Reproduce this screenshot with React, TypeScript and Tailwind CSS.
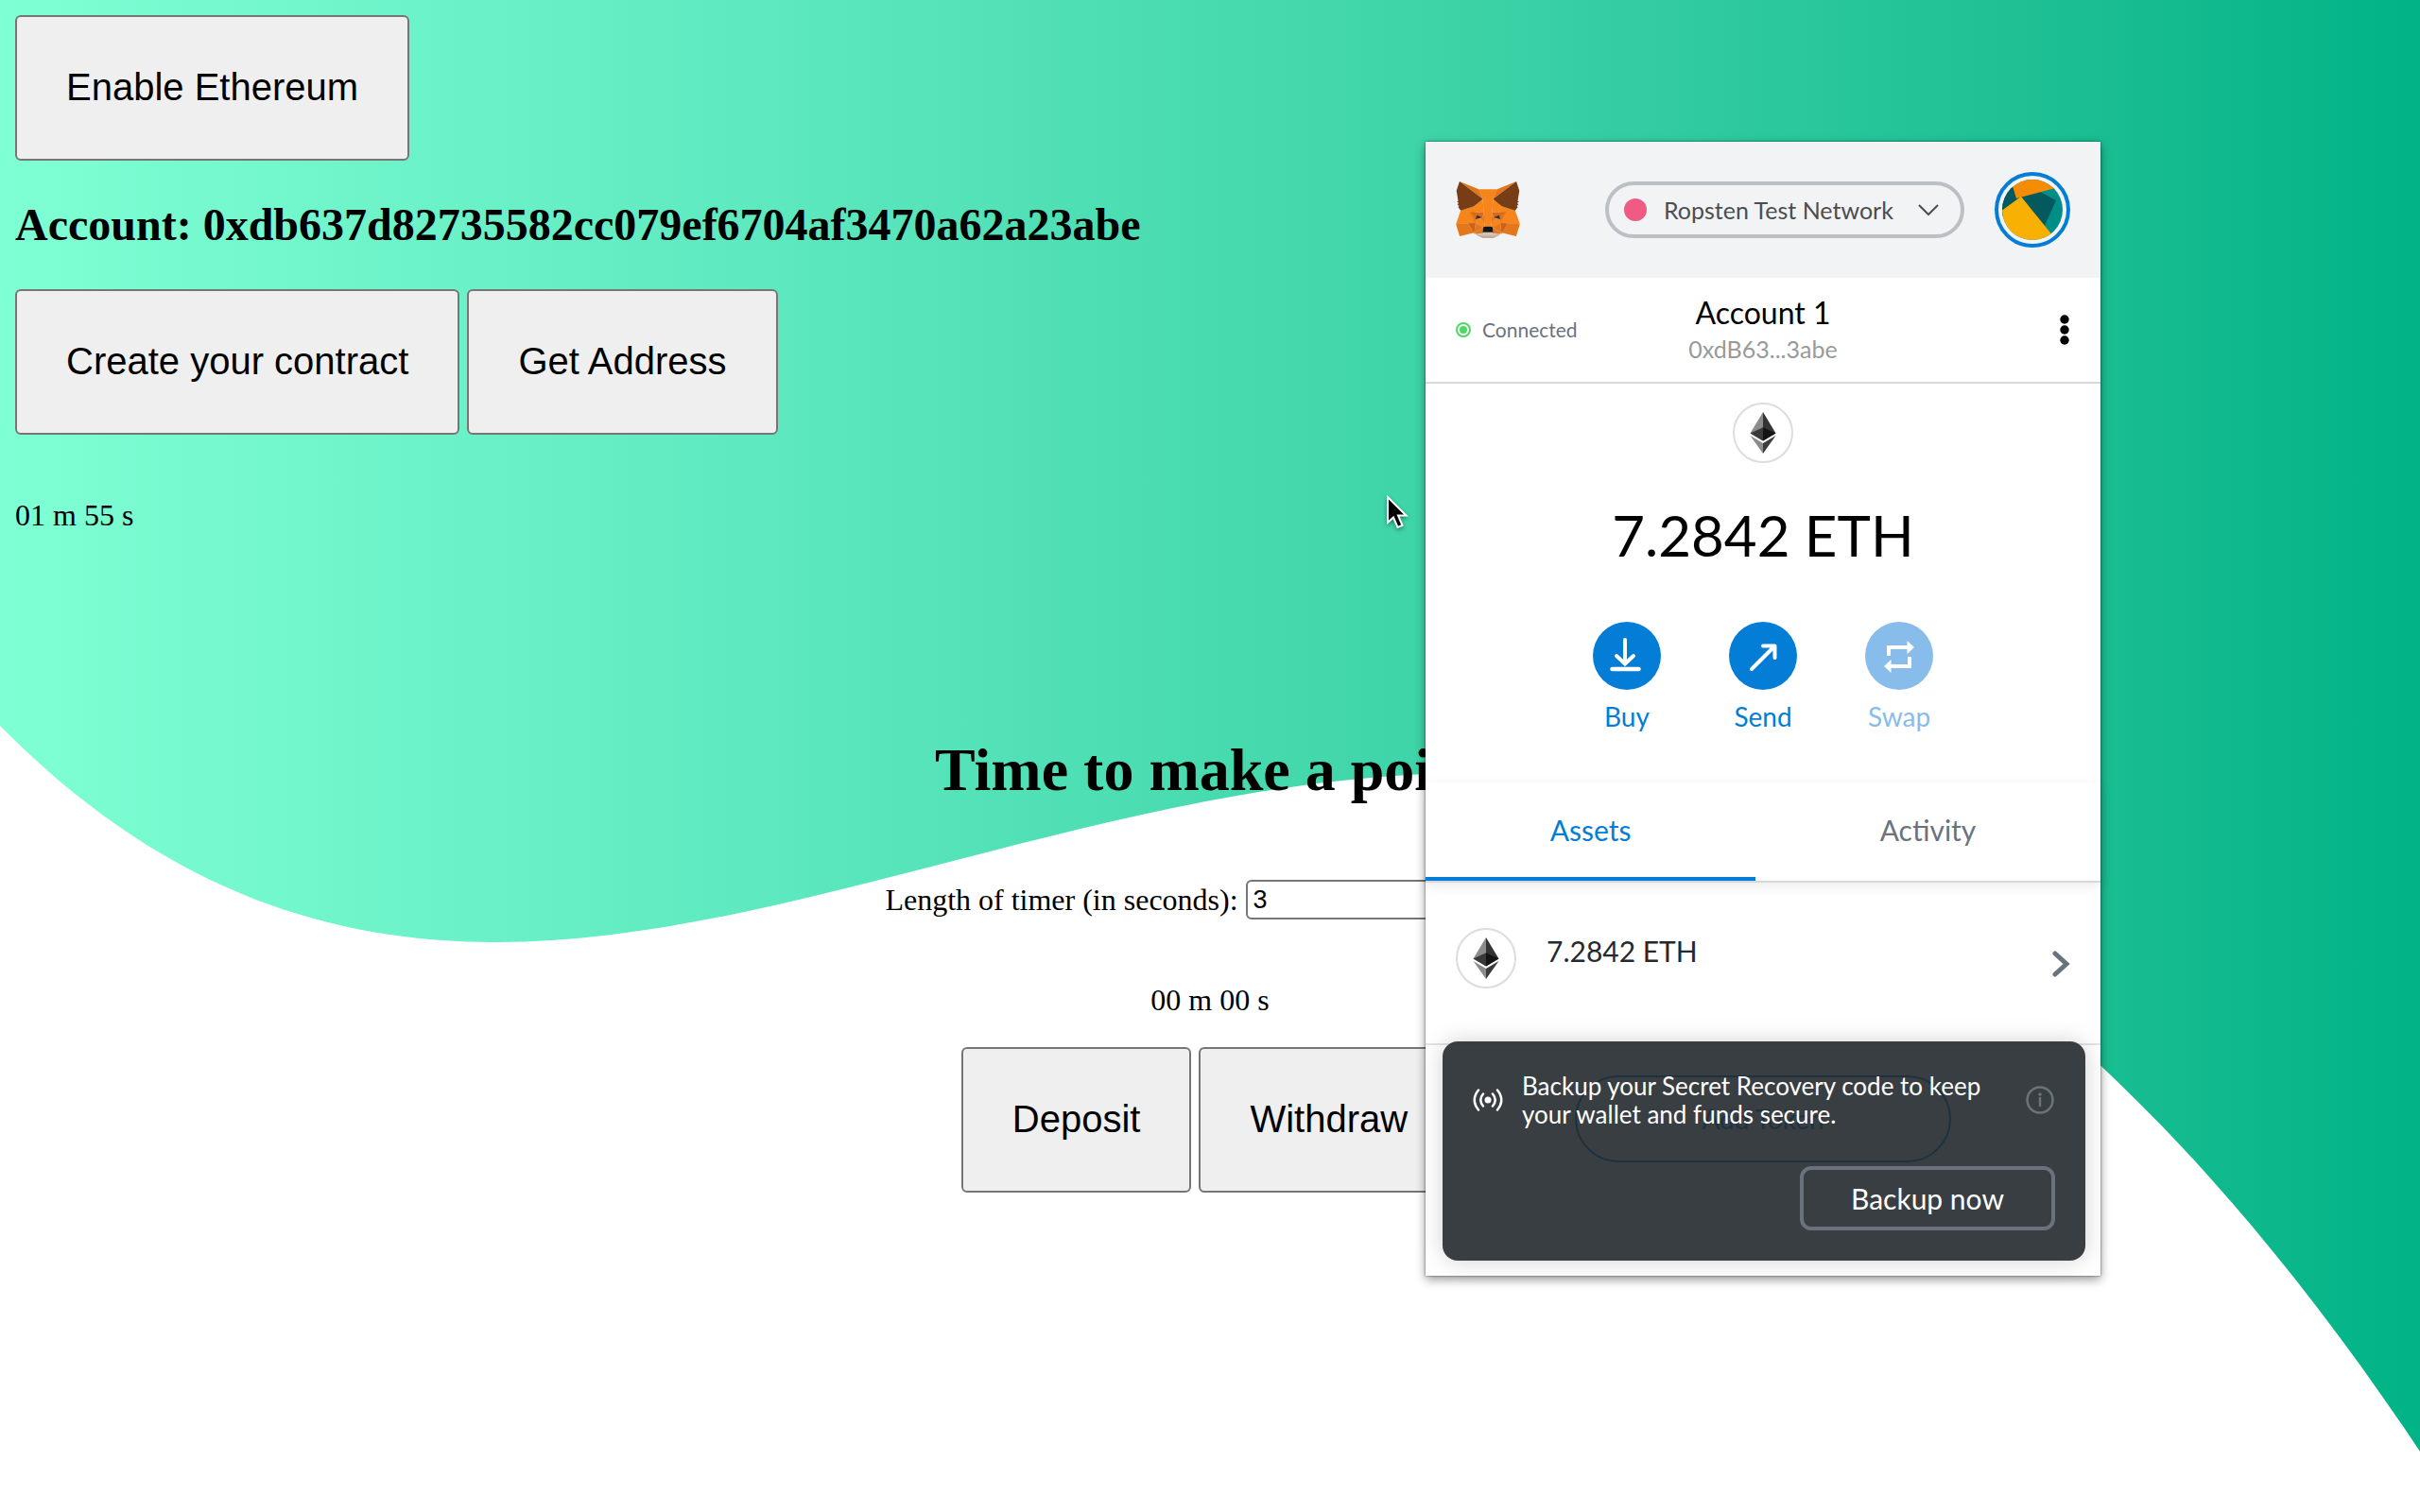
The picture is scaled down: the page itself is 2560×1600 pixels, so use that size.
import type { ReactNode } from "react";

function Wave() {
  return (
    <svg
      className="absolute inset-0 h-full w-full"
      viewBox="0 0 2560 1600"
      preserveAspectRatio="none"
      aria-hidden="true"
    >
      <defs>
        <linearGradient id="sea" x1="0" y1="0" x2="1" y2="0">
          <stop offset="0" stopColor="#7fffd4" />
          <stop offset="0.35" stopColor="#5ae6bd" />
          <stop offset="0.6" stopColor="#3dd3a7" />
          <stop offset="0.87" stopColor="#19bd91" />
          <stop offset="1" stopColor="#00b386" />
        </linearGradient>
      </defs>
      <path
        fill="url(#sea)"
        d="M0 0H2560V1536C2270 1100 1920 818 1560 818C1190 818 840 997 525 997C330 997 160 930 0 768Z"
      />
    </svg>
  );
}

function BigButton({ children }: { children: ReactNode }) {
  return (
    <button
      type="button"
      className="rounded-md border-2 border-[#767676] bg-[#efefef] px-[52px] pt-[51px] pb-[53px] font-['Liberation_Sans',Arial,sans-serif] text-[40px] leading-[46px] text-black"
    >
      {children}
    </button>
  );
}

function FoxHalf() {
  return (
    <>
      <polygon fill="#d7c1b3" points="66,173 88.3,168.75 106.5,168.75 106.5,187.9 89.4,187.9 68.6,178.9" />
      <polygon fill="#c0ad9e" points="67,176 88.3,180 106.5,180 106.5,187.9 89.4,187.9" />
      <polygon fill="#f6851b" points="75.4,27 88.9,58.5 95,150.2 106.5,150.2 106.5,27" />
      <polygon fill="#f6851b" points="16.3,96.2 .6,141.75 40,139.5 65.25,139.5 65.25,119.8 64.1,79.3 58.5,83.8" />
      <polygon fill="#d96a18" points="46.1,101.25 92.25,102.4 87.2,126 65.25,120.4" />
      <polygon fill="#e4751f" points="46.1,101.8 65.25,119.8 65.25,137.8" />
      <polygon fill="#f6851b" points="65.25,120.4 87.75,126 95,150.2 90,153 65.25,138.4" />
      <polygon fill="#e4761b" points="65.25,138.4 60.75,173.25 90.6,152.4" />
      <polygon fill="#e4751f" points="92.25,102.4 95,150.2 86.6,125.7" />
      <polygon fill="#cd6116" points="39.4,139 65.25,138.4 60.75,173.25" />
      <polygon fill="#e4761b" points="12.9,182 60.75,170 39.4,139 .6,141.75" />
      <polygon fill="#f6851b" points="88.9,58.5 64.7,78.75 46.1,101.25 92.25,103" />
      <polygon fill="#e4761b" points="60.75,173.25 90.6,152.4 88.3,171 68,174" />
      <polygon fill="#233447" points="70.3,112.5 64.1,125.4 86,119.8" />
      <polygon fill="#e2761b" points="12.4,.6 88.9,58.5 75.9,27" />
      <path fill="#763d16" d="M12.4.6 2.3 31.5 7.9 65.3 3.9 67.5 9.6 72.6 5 76.5 11.3 82 7.3 85.5 16.3 96.8 58.5 83.8C79 67.3 89 59 88.9 58.5Z" />
      <path fill="#161616" d="M90.6 152.4 88.3 171 91 168.75H106.5V150H94.5Z" />
    </>
  );
}

function Fox() {
  return (
    <svg className="h-[62px] w-[68px]" viewBox="0 0 212 189" role="img" aria-label="MetaMask">
      <FoxHalf />
      <g transform="matrix(-1 0 0 1 212 0)">
        <FoxHalf />
      </g>
    </svg>
  );
}

function EtherIcon() {
  return (
    <span className="flex size-16 shrink-0 items-center justify-center rounded-full border-2 border-[#dddddd] bg-white">
      <svg className="h-11 w-7" viewBox="0 0 256 417" aria-hidden="true">
        <polygon fill="#343434" points="128,0 128,288 256,212.3" />
        <polygon fill="#8c8c8c" points="128,0 0,212.3 128,288" />
        <polygon fill="#3c3c3b" points="128,312.2 128,417 256,236.6" />
        <polygon fill="#8c8c8c" points="128,417 128,312.2 0,236.6" />
        <polygon fill="#141414" points="128,288 256,212.3 128,154.2" />
        <polygon fill="#393939" points="0,212.3 128,288 128,154.2" />
      </svg>
    </span>
  );
}

function Avatar() {
  return (
    <button
      type="button"
      aria-label="My accounts"
      className="flex size-20 items-center justify-center rounded-full border-4 border-[#037dd6]"
    >
      <svg className="size-16" viewBox="0 0 64 64" aria-hidden="true">
        <defs>
          <clipPath id="disc">
            <circle cx="32" cy="32" r="32" />
          </clipPath>
        </defs>
        <g clipPath="url(#disc)">
          <rect width="64" height="64" fill="#018e86" />
          <polygon fill="#04595f" points="0,0 12,8 15,20 19,18 40,13 57,22 45,49 38,46 0,40" />
          <polygon fill="#f58c05" points="10,0 60,0 60,8 15,20 11,7" />
          <polygon fill="#f8b003" points="-2,34 20,18 54,60 40,70 0,66" />
        </g>
      </svg>
    </button>
  );
}

function Action({ label, faded, children }: { label: string; faded?: boolean; children: ReactNode }) {
  return (
    <button
      type="button"
      disabled={faded}
      className="flex w-[72px] flex-col items-center gap-3 text-[28px] leading-8 text-[#037dd6] disabled:text-[#88bdeb]"
    >
      <span
        className={
          faded
            ? "flex size-[72px] items-center justify-center rounded-full bg-[#88bdeb]"
            : "flex size-[72px] items-center justify-center rounded-full bg-[#037dd6]"
        }
      >
        <svg className="size-[72px]" viewBox="0 0 72 72" fill="none" stroke="#fff" aria-hidden="true">
          {children}
        </svg>
      </span>
      {label}
    </button>
  );
}

function Wallet() {
  return (
    <section
      aria-label="Wallet"
      className="absolute top-[150px] right-[338px] w-[714px] bg-white pb-[120px] font-[Lato,sans-serif] shadow-[0_0_2px_rgba(0,0,0,0.6),0_4px_10px_rgba(0,0,0,0.4)]"
    >
      <header className="flex h-36 items-center gap-8 bg-[#f2f3f4] pr-8 pl-8">
        <Fox />
        <button
          type="button"
          className="ml-auto flex h-[60px] w-[380px] items-center rounded-full border-4 border-[#bbc0c5] pr-[23px] pl-4 text-[25px] text-[#4d4d4d]"
        >
          <span className="size-6 rounded-full bg-[#f05b84]" />
          <span className="ml-[18px]">Ropsten Test Network</span>
          <svg className="ml-auto h-3 w-[22px]" viewBox="0 0 22 12" fill="none" stroke="#4d4d4d" strokeWidth="2" aria-hidden="true">
            <path d="M1 1 11 11 21 1" />
          </svg>
        </button>
        <Avatar />
      </header>

      <div className="grid h-28 grid-cols-3 items-center border-b-2 border-[#d6d9dc] px-8">
        <div className="flex items-center gap-3 text-[21px] text-[#6a737d]">
          <span className="flex size-4 items-center justify-center rounded-full border-2 border-[#4cd964]">
            <span className="size-2 rounded-full bg-[#4cd964]" />
          </span>
          Connected
        </div>
        <div className="text-center">
          <div className="text-[32px] leading-10 text-black">Account 1</div>
          <div className="text-[25px] leading-9 text-[#989a9b]">0xdB63...3abe</div>
        </div>
        <button type="button" aria-label="Account options" className="justify-self-end">
          <svg className="h-8 w-3" viewBox="0 0 12 32" aria-hidden="true">
            <circle cx="6" cy="5" r="4.7" />
            <circle cx="6" cy="16" r="4.7" />
            <circle cx="6" cy="27" r="4.7" />
          </svg>
        </button>
      </div>

      <div className="flex flex-col items-center pt-5 pb-[54px]">
        <EtherIcon />
        <div className="mt-10 text-[60px] leading-[72px] text-black">7.2842 ETH</div>
        <div className="mt-14 flex gap-[72px]">
          <Action label="Buy">
            <path d="M34 19V43M25 36 34 44.500 43 36" strokeWidth="4" strokeLinecap="round" />
            <path d="M20.500 50H48.500" strokeWidth="4.500" strokeLinecap="round" />
          </Action>
          <Action label="Send">
            <path d="M24 50 48 26M36 25.500H48.500V38" strokeWidth="4" strokeLinecap="round" strokeLinejoin="round" />
          </Action>
          <Action label="Swap" faded>
            <path d="M25 36V27H45M47 37V47H27" strokeWidth="4" />
            <path d="M44.500 20 52 27 44.500 34ZM27.500 40 20 47 27.500 54Z" fill="#fff" stroke="none" />
          </Action>
        </div>
      </div>

      <div role="tablist" className="flex border-b-2 border-[#d6d9dc] text-[30px] shadow-[0_4px_12px_rgba(0,0,0,0.08)]">
        <button
          type="button"
          role="tab"
          aria-selected="true"
          className="h-[104px] flex-auto border-b-4 border-[#037dd6] text-[#037dd6]"
        >
          Assets
        </button>
        <button type="button" role="tab" aria-selected="false" className="h-[104px] flex-auto border-b-4 border-transparent text-[#6a737d]">
          Activity
        </button>
      </div>

      <button type="button" className="flex w-full items-start border-b-2 border-[#e1e3e5] px-8 pt-12 pb-[58px] text-left">
        <EtherIcon />
        <span className="ml-8 pt-1 text-[30px] leading-10 text-[#24292e]">7.2842 ETH</span>
        <svg className="mt-6 ml-auto h-7 w-5" viewBox="0 0 20 28" fill="none" stroke="#6a737d" strokeWidth="5" aria-hidden="true">
          <path d="M4 3 16 14 4 25" strokeLinecap="round" />
        </svg>
      </button>

      <div className="flex justify-center pt-8">
        <button type="button" className="h-[92px] w-[398px] rounded-full border-2 border-[#037dd6] text-[28px] text-[#037dd6]">
          Add Token
        </button>
      </div>

      <aside className="absolute right-4 bottom-4 left-[18px] rounded-2xl bg-[#24292e]/90 p-8 text-white shadow-[0_0_24px_rgba(0,0,0,0.18)]">
        <div className="flex items-center">
          <svg className="h-6 w-8 shrink-0" viewBox="0 0 32 24" fill="none" stroke="#fff" strokeWidth="2.500" strokeLinecap="round" aria-hidden="true">
            <circle cx="16" cy="12" r="3.500" fill="#fff" stroke="none" />
            <path d="M11 5.500Q5.500 12 11 18.500M21 5.500Q26.500 12 21 18.500M6 1.500Q-2.500 12 6 22.500M26 1.500Q34.500 12 26 22.500" />
          </svg>
          <p className="ml-5 flex-1 text-[26px] leading-[30px]">
            Backup your Secret Recovery code to keep
            <br />
            your wallet and funds secure.
          </p>
          <svg className="size-8 shrink-0" viewBox="0 0 32 32" fill="none" stroke="#6a737d" strokeWidth="2.500" aria-hidden="true">
            <circle cx="16" cy="16" r="13.500" />
            <path d="M16 14V22" strokeLinecap="round" />
            <circle cx="16" cy="10" r="1.800" fill="#6a737d" stroke="none" />
          </svg>
        </div>
        <button type="button" className="mt-10 ml-auto block h-[68px] w-[270px] rounded-xl border-4 border-[#6a737d] text-[30px] leading-8">
          Backup now
        </button>
      </aside>
    </section>
  );
}

function Cursor() {
  return (
    <svg
      className="absolute top-[522px] left-[1465px] h-[40px] w-[26px] drop-shadow-[0_2px_2px_rgba(0,0,0,0.4)]"
      viewBox="0 0 26 40"
      aria-hidden="true"
    >
      <path
        d="M3 4V31L9 25.500 13.500 36 18.500 34 14 23.500H22.500Z"
        fill="#000"
        stroke="#fff"
        strokeWidth="2"
      />
    </svg>
  );
}

export default function App() {
  return (
    <main className="relative min-h-screen overflow-hidden bg-white font-['Liberation_Serif','Times_New_Roman',serif] text-[32px] leading-9 text-black">
      <Wave />
      <div className="relative p-4">
        <BigButton>Enable Ethereum</BigButton>
        <h2 className="mt-10 text-5xl leading-[56px] font-bold">
          Account: 0xdb637d82735582cc079ef6704af3470a62a23abe
        </h2>
        <div className="mt-10 flex gap-2">
          <BigButton>Create your contract</BigButton>
          <BigButton>Get Address</BigButton>
        </div>
        <p className="mt-[67px]">01 m 55 s</p>

        <div className="mt-[216px] flex flex-col items-center">
          <h1 className="text-[64px] leading-[72px] font-bold">Time to make a point</h1>
          <div className="mt-20 flex items-center gap-2">
            <label htmlFor="length">Length of timer (in seconds):</label>
            <input
              id="length"
              type="text"
              defaultValue="3"
              className="h-[42px] w-[306px] rounded-md border-2 border-[#767676] bg-white px-1.5 font-['Liberation_Sans',Arial,sans-serif] text-[27px]"
            />
          </div>
          <p className="mt-[67px]">00 m 00 s</p>
          <div className="mt-8 flex gap-2">
            <BigButton>Deposit</BigButton>
            <BigButton>Withdraw</BigButton>
          </div>
        </div>
      </div>
      <Wallet />
      <Cursor />
    </main>
  );
}
